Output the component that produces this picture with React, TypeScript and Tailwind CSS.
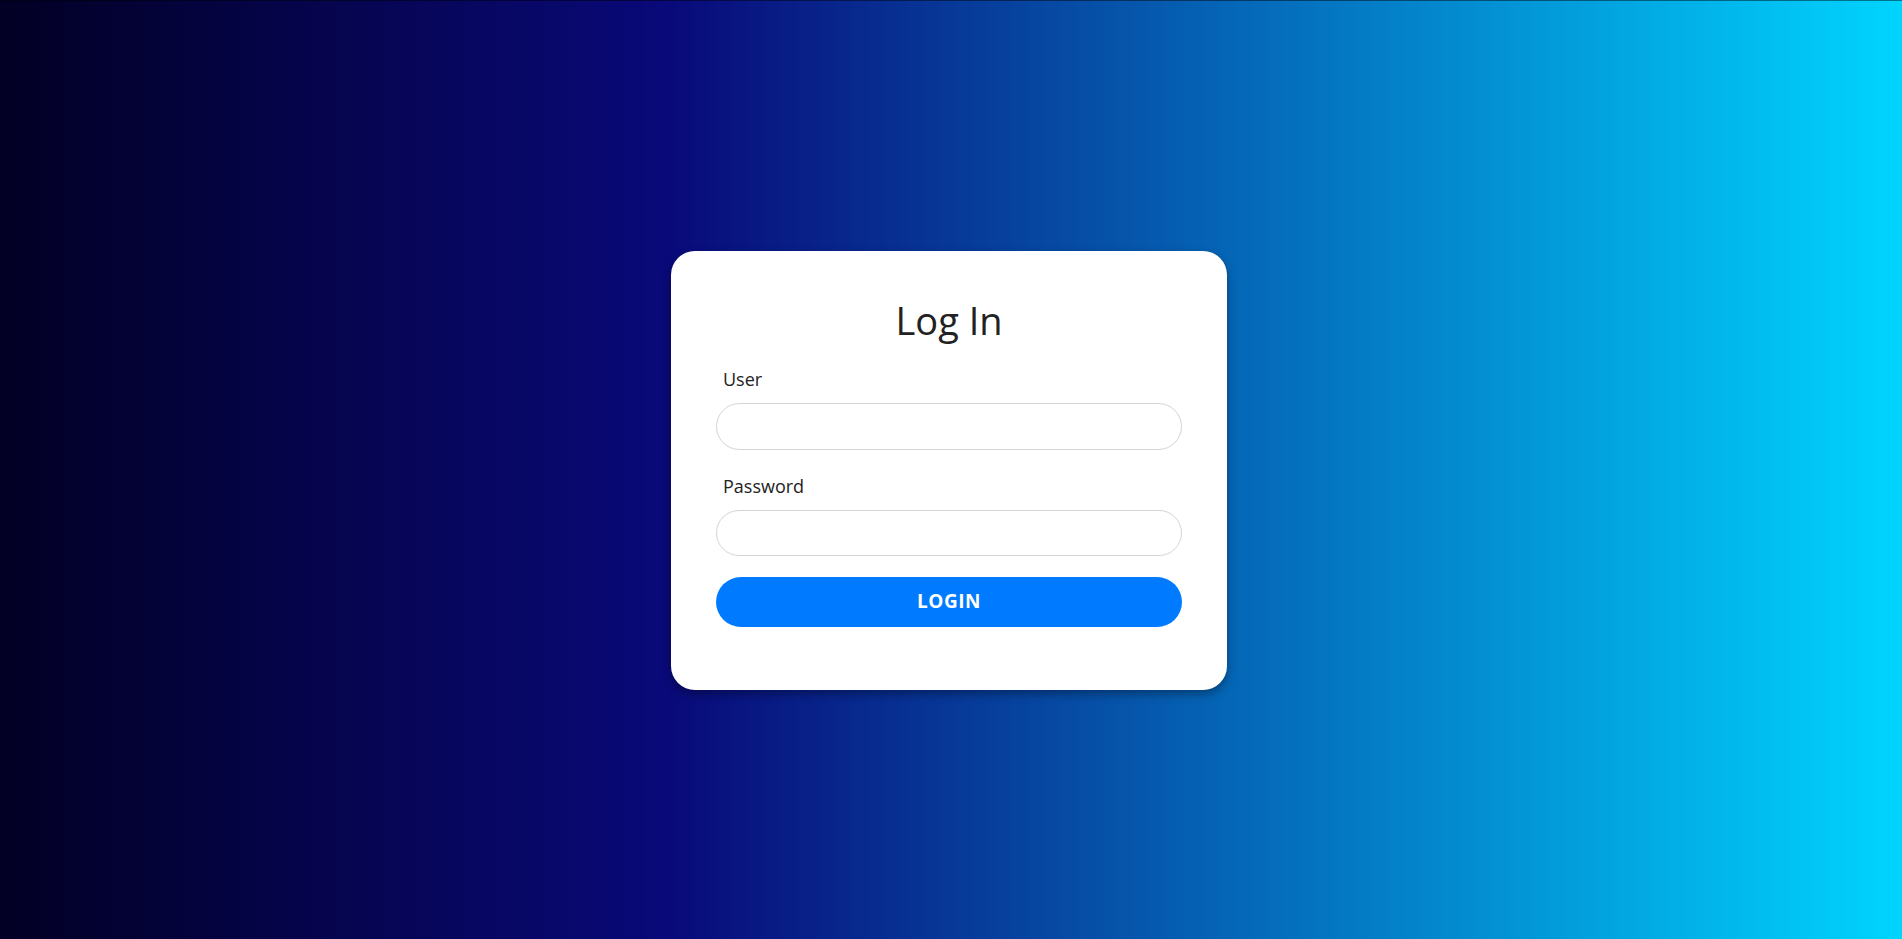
import React from "react";

export default function App() {
  return (
    <div
      className="w-full h-[939px] border-t border-[rgba(0,0,0,0.45)] flex items-center justify-center bg-[linear-gradient(90deg,#020024_0%,#090979_35%,#00d4ff_100%)]"
      style={{ fontFamily: '"Open Sans", "Noto Sans", sans-serif' }}
    >
      <div className="w-[556px] mr-[4px] bg-white rounded-[24px] shadow-[0_4px_10px_rgba(0,0,0,0.35)] px-[45px] pt-[46px] pb-[63px] flex flex-col">
        <h1 className="text-[38px] leading-[46px] text-center text-[#222]">Log In</h1>
        <label className="mt-[24px] ml-[7px] text-[18px] leading-[24px] text-[#222]">User</label>
        <input
          type="text"
          className="mt-[12px] h-[47px] w-full rounded-full border border-[#d4d4d4] px-4 outline-none"
        />
        <label className="mt-[24px] ml-[7px] text-[18px] leading-[24px] text-[#222]">Password</label>
        <input
          type="password"
          className="mt-[12px] h-[46px] w-full rounded-full border border-[#d4d4d4] px-4 outline-none"
        />
        <button className="mt-[21px] h-[50px] w-full rounded-full bg-[#007bff] text-white font-bold text-[19px] tracking-[0.5px]">
          LOGIN
        </button>
      </div>
    </div>
  );
}
